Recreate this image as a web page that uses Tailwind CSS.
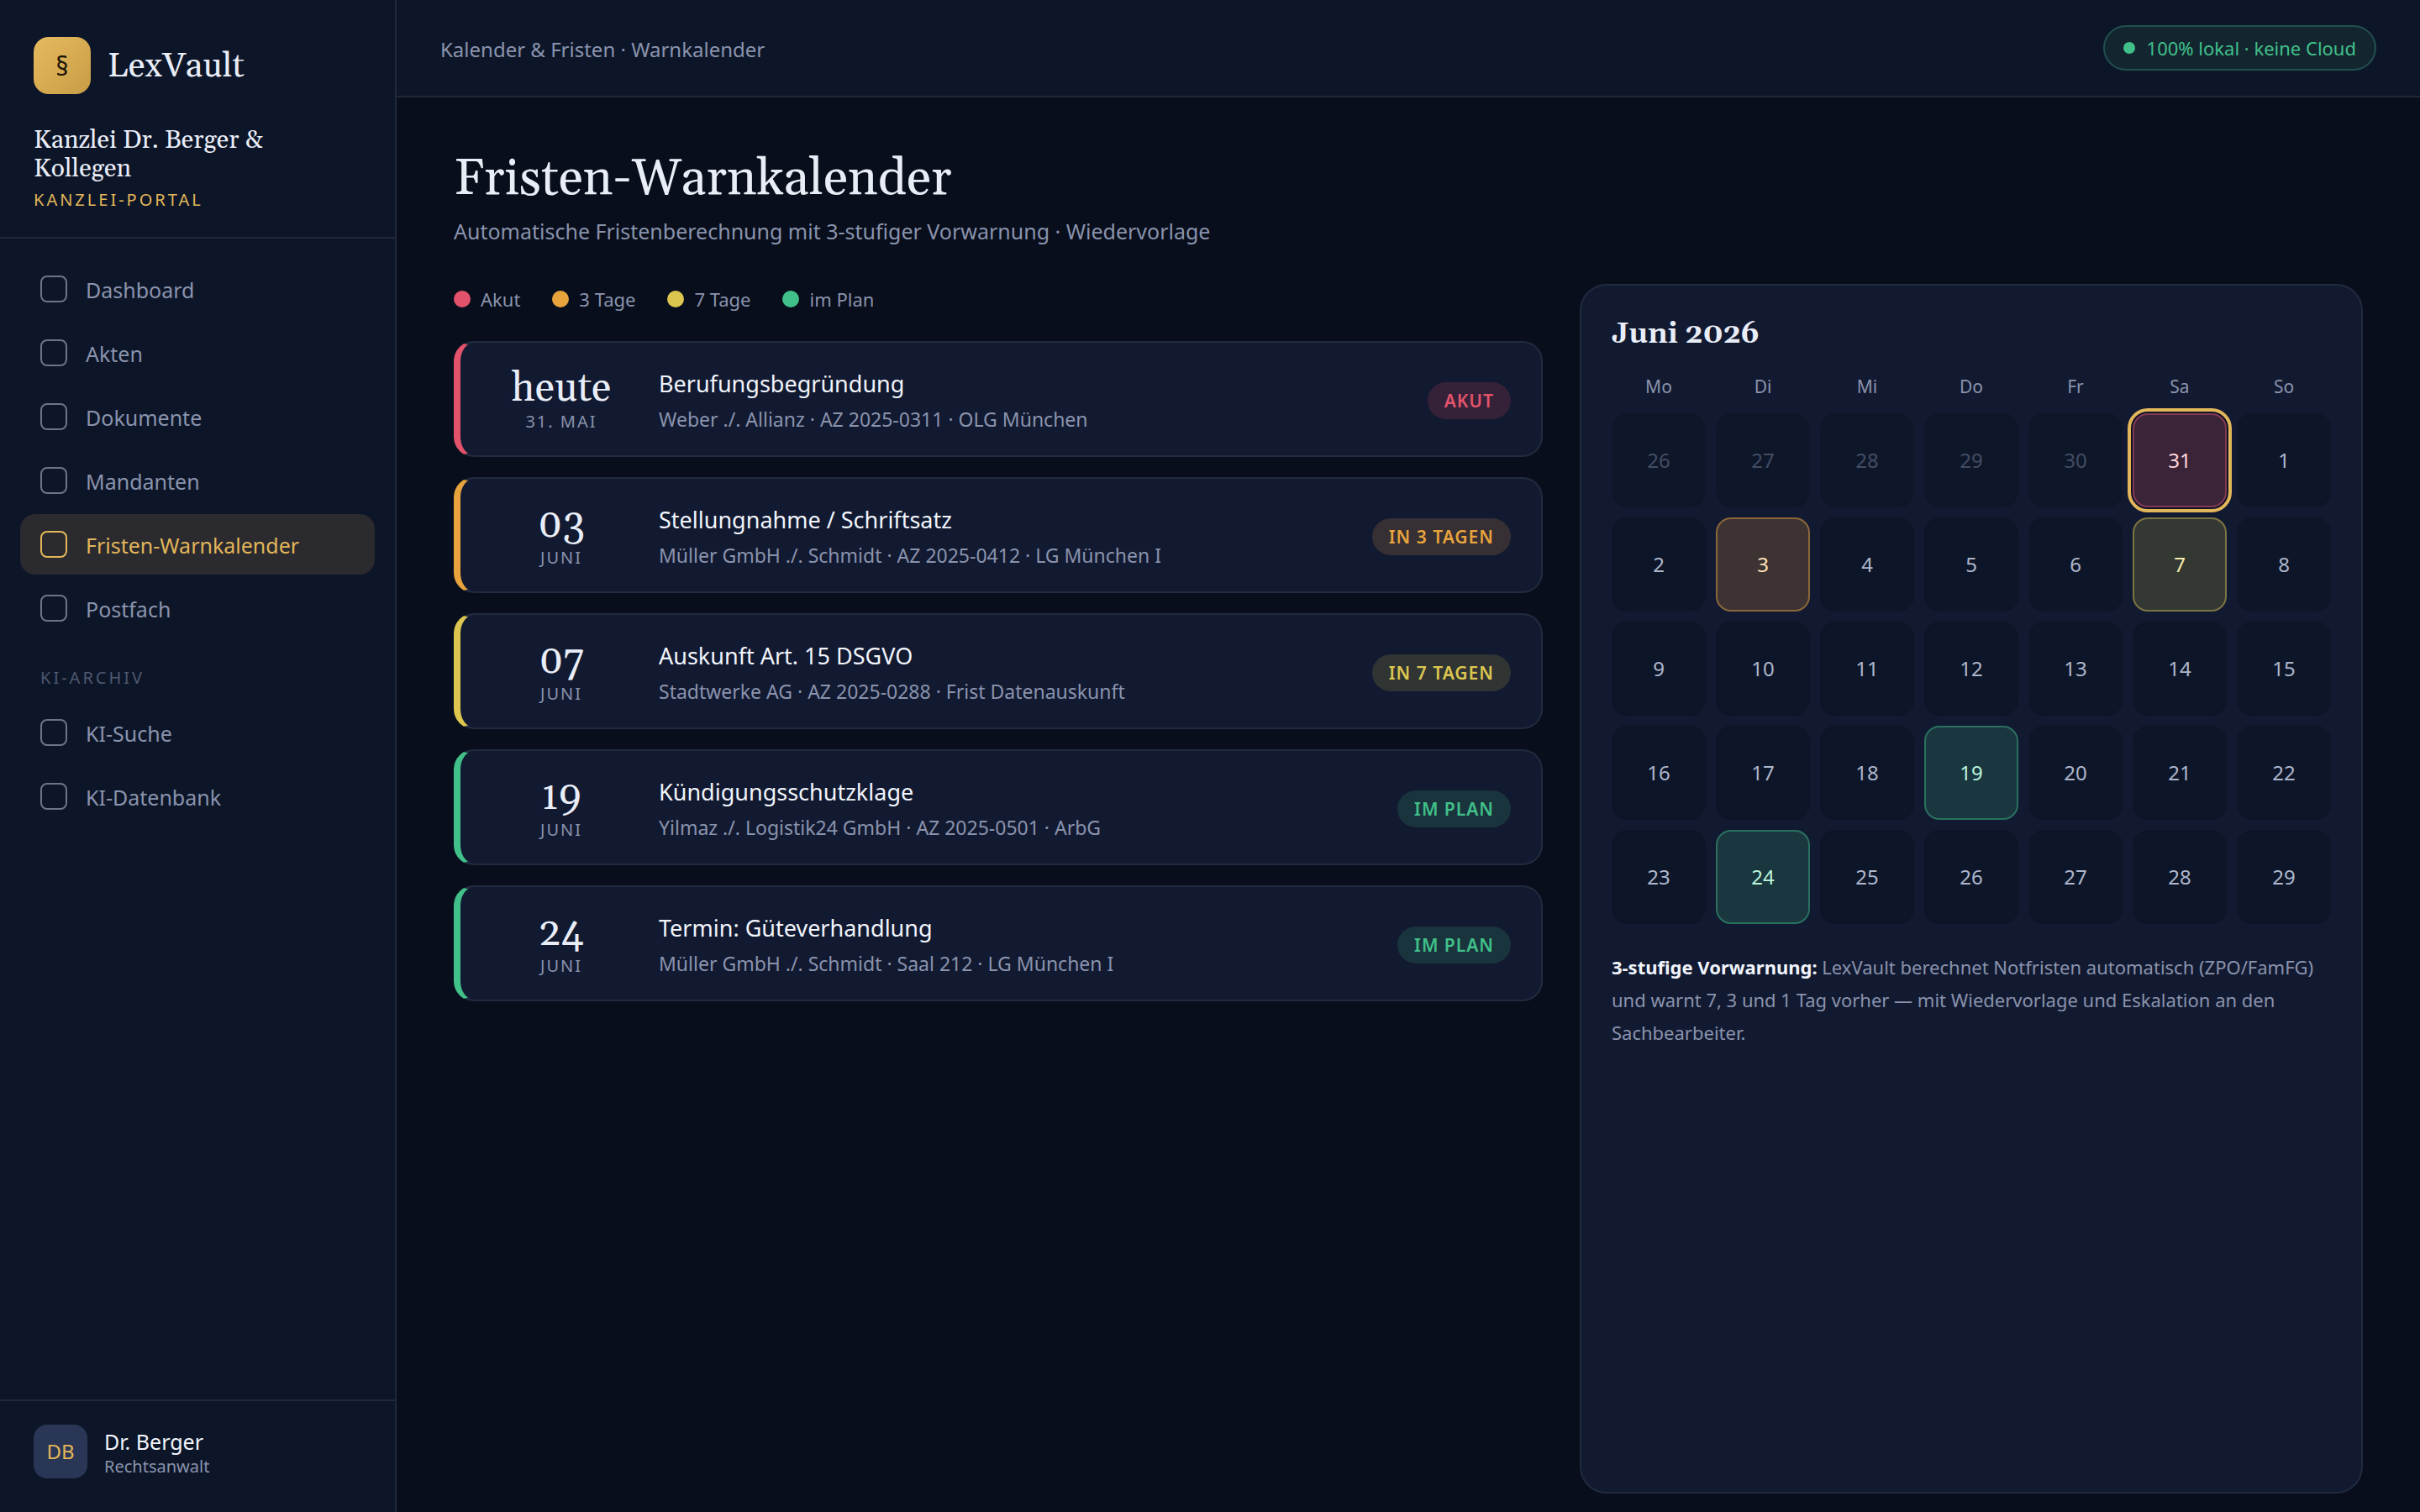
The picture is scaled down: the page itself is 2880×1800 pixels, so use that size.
<!DOCTYPE html>
<html lang="de">
<head>
  <meta charset="UTF-8">
  <meta name="viewport" content="width=device-width, initial-scale=1">
  <title>LexVault – Fristen-Warnkalender</title>
  <script src="https://cdn.jsdelivr.net/npm/@tailwindcss/browser@4"></script>
</head>
<body class="flex min-h-screen bg-[#080e1b] font-['Segoe_UI','Noto_Sans',sans-serif] text-[#8a93ad]">

  <!-- Sidebar -->
  <aside class="flex w-[472px] shrink-0 flex-col border-r-2 border-[#212839] bg-[#0d1628]">
    <div class="border-b-2 border-[#212839] px-10 pt-11 pb-7">
      <div class="flex items-center gap-5">
        <div class="flex size-[68px] items-center justify-center rounded-[18px] bg-linear-to-br from-[#e6bb5f] to-[#c79c45] text-[30px] text-[#1a1408]">§</div>
        <span class="pt-1 font-[Georgia,Gelasio,'Liberation_Serif',serif] text-[41px] text-[#e9edf7]">LexVault</span>
      </div>
      <p class="mt-[38px] font-[Georgia,Gelasio,'Liberation_Serif',serif] text-[30px] leading-[34px] text-[#e9edf7]">Kanzlei Dr. Berger &amp; Kollegen</p>
      <p class="mt-1 text-[20px] leading-[32px] tracking-[3px] text-[#e2b659]">KANZLEI-PORTAL</p>
    </div>

    <nav id="nav" class="flex flex-col gap-1 p-6"></nav>

    <div class="mt-auto flex items-center gap-5 border-t-2 border-[#212839] px-10 pt-7 pb-10">
      <div class="flex size-16 items-center justify-center rounded-2xl bg-[#2a3656] text-[24px] text-[#e2b659]">DB</div>
      <div class="pt-1">
        <p class="text-[25px] leading-[32px] text-[#f1f4fb]">Dr. Berger</p>
        <p class="text-[20px] leading-[28px]">Rechtsanwalt</p>
      </div>
    </div>
  </aside>

  <div class="flex min-w-0 grow flex-col">
    <header class="flex items-center justify-between border-b-2 border-[#212839] bg-[#0d1628] px-[52px] py-[30px]">
      <p class="pt-1 text-[24px] leading-[50px]">Kalender &amp; Fristen · Warnkalender</p>
      <div class="flex items-center gap-[14px] rounded-full border-2 border-[#22504f] bg-[#132630] px-[22px] text-[22px] leading-[50px] text-[#41c08a]">
        <span class="size-[14px] rounded-full bg-[#41c08a]"></span>100% lokal · keine Cloud
      </div>
    </header>

    <main class="flex grow flex-col px-[68px] pt-[62px] pb-[22px]">
      <h1 class="font-[Georgia,Gelasio,'Liberation_Serif',serif] text-[60px] leading-[72px] text-[#e9edf7]">Fristen-Warnkalender</h1>
      <p class="mt-[6px] text-[25px] leading-[38px]">Automatische Fristenberechnung mit 3-stufiger Vorwarnung · Wiedervorlage</p>

      <div class="mt-11 grid grow grid-cols-[1296fr_932fr] gap-11">
        <section>
          <ul class="mb-8 flex gap-[38px] text-[22px] leading-[36px]">
            <li class="flex items-center gap-3"><span class="size-5 rounded-full bg-[#e2536b]"></span>Akut</li>
            <li class="flex items-center gap-3"><span class="size-5 rounded-full bg-[#e8a33d]"></span>3 Tage</li>
            <li class="flex items-center gap-3"><span class="size-5 rounded-full bg-[#dcc64f]"></span>7 Tage</li>
            <li class="flex items-center gap-3"><span class="size-5 rounded-full bg-[#41c08a]"></span>im Plan</li>
          </ul>
          <div id="fristen" class="flex flex-col gap-6"></div>
        </section>

        <section class="rounded-[32px] border-2 border-[#212a3e] bg-[#121a31] p-9">
          <h2 class="font-[Georgia,Gelasio,'Liberation_Serif',serif] text-[34px] leading-[44px] font-bold text-[#e9edf7] oldstyle-nums">Juni 2026</h2>
          <table class="-mx-3 mt-2 w-[calc(100%+24px)] table-fixed border-separate border-spacing-x-3 border-spacing-y-3 text-center">
            <thead>
              <tr class="text-[21px] leading-[40px]">
                <th class="font-normal">Mo</th>
                <th class="font-normal">Di</th>
                <th class="font-normal">Mi</th>
                <th class="font-normal">Do</th>
                <th class="font-normal">Fr</th>
                <th class="font-normal">Sa</th>
                <th class="font-normal">So</th>
              </tr>
            </thead>
            <tbody id="tage"></tbody>
          </table>
          <p class="mt-5 text-[22px] leading-[39px]"><b class="text-[#f1f4fb]">3-stufige Vorwarnung:</b> LexVault berechnet Notfristen automatisch (ZPO/FamFG) und warnt 7, 3 und 1 Tag vorher — mit Wiedervorlage und Eskalation an den Sachbearbeiter.</p>
        </section>
      </div>
    </main>
  </div>

  <script>
    const nav = ['Dashboard', 'Akten', 'Dokumente', 'Mandanten', 'Fristen-Warnkalender', 'Postfach', '# KI-ARCHIV', 'KI-Suche', 'KI-Datenbank'];
    const active = 'Fristen-Warnkalender';

    document.getElementById('nav').innerHTML = nav.map(n => {
      if (n.startsWith('# ')) {
        return `<p class="px-6 pt-[27px] pb-[9px] text-[20px] leading-[32px] tracking-[3px] text-[#4d576f]">${n.slice(2)}</p>`;
      }
      const on = n === active;
      return `<a href="#" class="flex h-[72px] items-center gap-[22px] rounded-[18px] px-6 text-[25px] ${on ? 'bg-[#2a2a2f] text-[#e2b659]' : ''}">
        <span class="size-8 rounded-lg border-2 ${on ? 'border-[#e2b659]' : 'border-[#6c7489]'}"></span><span class="pt-1">${n}</span></a>`;
    }).join('');

    // Ampelstufen
    const stufen = {
      akut: { rand: 'border-l-[#e2536b]', badge: 'bg-[#352239] text-[#e2536b]' },
      drei: { rand: 'border-l-[#e8a33d]', badge: 'bg-[#362f33] text-[#e8a33d]' },
      sieben: { rand: 'border-l-[#dcc64f]', badge: 'bg-[#303433] text-[#dcc64f]' },
      plan: { rand: 'border-l-[#41c08a]', badge: 'bg-[#19343d] text-[#41c08a]' }
    };

    const fristen = [
      ['akut', 'heute', '31. MAI', 'Berufungsbegründung', 'Weber ./. Allianz · AZ 2025-0311 · OLG München', 'AKUT'],
      ['drei', '03', 'JUNI', 'Stellungnahme / Schriftsatz', 'Müller GmbH ./. Schmidt · AZ 2025-0412 · LG München I', 'IN 3 TAGEN'],
      ['sieben', '07', 'JUNI', 'Auskunft Art. 15 DSGVO', 'Stadtwerke AG · AZ 2025-0288 · Frist Datenauskunft', 'IN 7 TAGEN'],
      ['plan', '19', 'JUNI', 'Kündigungsschutzklage', 'Yilmaz ./. Logistik24 GmbH · AZ 2025-0501 · ArbG', 'IM PLAN'],
      ['plan', '24', 'JUNI', 'Termin: Güteverhandlung', 'Müller GmbH ./. Schmidt · Saal 212 · LG München I', 'IM PLAN']
    ];

    document.getElementById('fristen').innerHTML = fristen.map(([s, tag, monat, titel, info, badge]) => `
      <article class="flex h-[138px] items-center gap-8 rounded-3xl border-2 border-l-8 border-[#212a3e] ${stufen[s].rand} bg-[#121a31] px-9 pt-[3px]">
        <div class="w-[168px] text-center">
          <p class="font-[Georgia,Gelasio,'Liberation_Serif',serif] text-[48px] leading-[50px] text-[#e9edf7] oldstyle-nums">${tag}</p>
          <p class="text-[20px] leading-[28px] tracking-[2px]">${monat}</p>
        </div>
        <div class="grow">
          <h3 class="text-[27px] leading-[42px] text-[#f1f4fb]">${titel}</h3>
          <p class="mt-[2px] text-[23px] leading-[38px]">${info}</p>
        </div>
        <span class="rounded-full px-5 text-[21px] leading-[44px] font-semibold tracking-[1px] ${stufen[s].badge}">${badge}</span>
      </article>`).join('');

    const marken = {
      31: 'border-[#803a54] bg-[#3c2438] text-[#ffd5dc] ring-2 ring-[#131224] outline-4 outline-offset-2 outline-[#e2b659]',
      3: 'border-[#8b6739] bg-[#3d3333] text-[#ffe3b5]',
      7: 'border-[#7c7543] bg-[#343833] text-[#f5ecab]',
      19: 'border-[#29705f] bg-[#1a3740] text-[#b9f5da]',
      24: 'border-[#29705f] bg-[#1a3740] text-[#b9f5da]'
    };
    const tage = [26, 27, 28, 29, 30, 31];
    for (let d = 1; d <= 29; d++) tage.push(d);

    let rows = '';
    for (let w = 0; w < 5; w++) {
      rows += '<tr>' + tage.slice(w * 7, w * 7 + 7).map((d, i) => {
        const vormonat = w === 0 && i < 5;
        const stil = (!vormonat && marken[d]) || (vormonat ? 'border-[#0e172a] bg-[#0e172a] text-[#434c63]' : 'border-[#0d1628] bg-[#0d1628] text-[#aeb6cc]');
        return `<td class="h-28 rounded-[18px] border-2 text-[24px] ${stil}">${d}</td>`;
      }).join('') + '</tr>';
    }
    document.getElementById('tage').innerHTML = rows;
  </script>
</body>
</html>
